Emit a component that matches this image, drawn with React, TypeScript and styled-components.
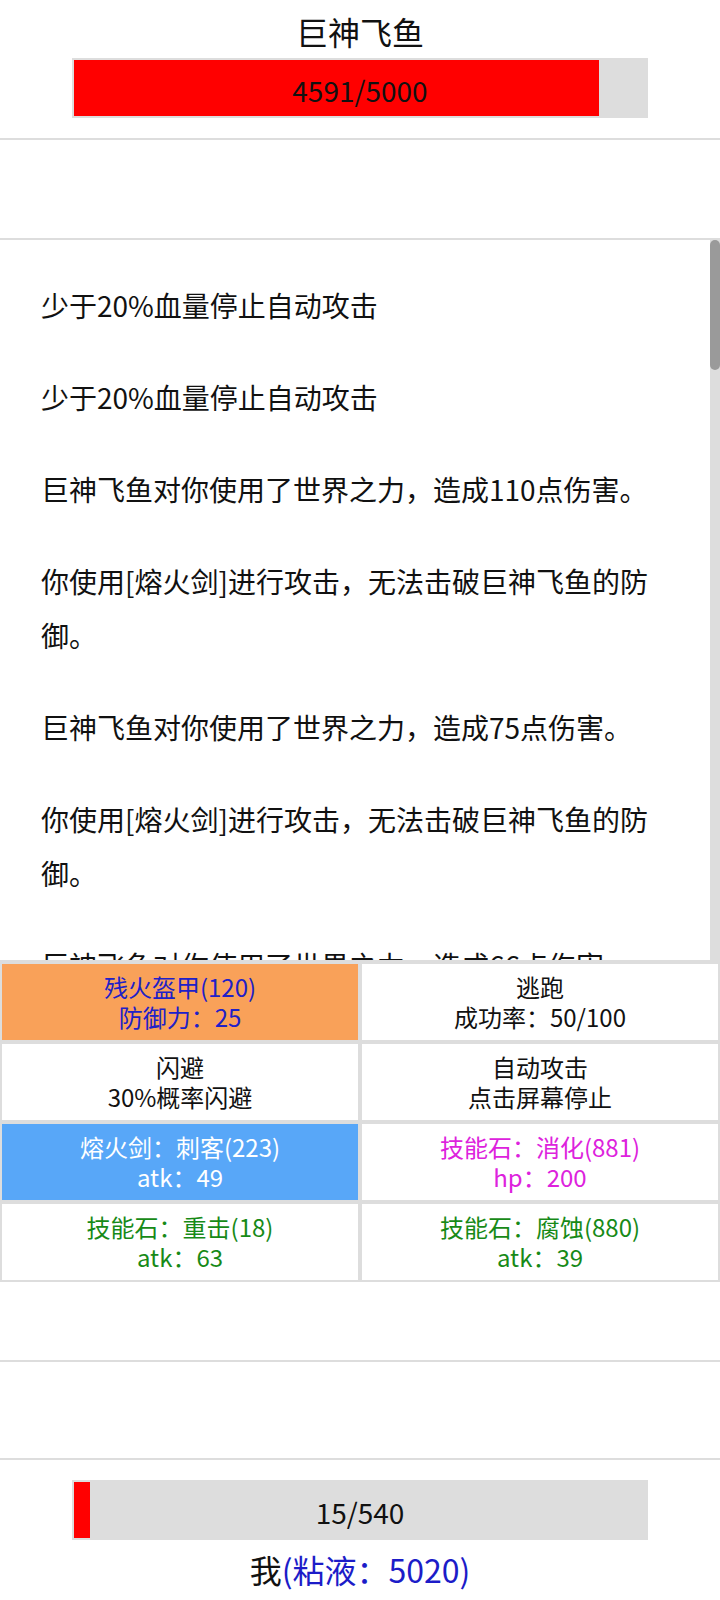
import styled, { createGlobalStyle } from 'styled-components';

const GlobalStyle = createGlobalStyle`
  html, body {
    margin: 0;
    padding: 0;
    background: #ffffff;
    font-family: "Noto Sans CJK SC", "Noto Sans", sans-serif;
    color: #111111;
  }
  * {
    box-sizing: border-box;
  }
`;

const MISS = '你使用[熔火剑]进行攻击，无法击破巨神飞鱼的防御。';
const hit = (n: number) => `巨神飞鱼对你使用了世界之力，造成${n}点伤害。`;

const extraDamage = [58, 91, 102, 70, 84, 63, 97, 115, 79, 88, 66, 105, 72];

const logLines: string[] = [
  '少于20%血量停止自动攻击',
  '少于20%血量停止自动攻击',
  hit(110),
  MISS,
  hit(75),
  MISS,
  hit(66),
  MISS,
  ...extraDamage.flatMap((n) => [hit(n), MISS]),
];

type Tone = 'orange' | 'blue' | 'plain';
type Ink = 'black' | 'navy' | 'white' | 'magenta' | 'green';

const actions: { title: string; sub: string; tone: Tone; ink: Ink }[] = [
  { title: '残火盔甲(120)', sub: '防御力：25', tone: 'orange', ink: 'navy' },
  { title: '逃跑', sub: '成功率：50/100', tone: 'plain', ink: 'black' },
  { title: '闪避', sub: '30%概率闪避', tone: 'plain', ink: 'black' },
  { title: '自动攻击', sub: '点击屏幕停止', tone: 'plain', ink: 'black' },
  { title: '熔火剑：刺客(223)', sub: 'atk：49', tone: 'blue', ink: 'white' },
  { title: '技能石：消化(881)', sub: 'hp：200', tone: 'plain', ink: 'magenta' },
  { title: '技能石：重击(18)', sub: 'atk：63', tone: 'plain', ink: 'green' },
  { title: '技能石：腐蚀(880)', sub: 'atk：39', tone: 'plain', ink: 'green' },
];

export default function App() {
  const enemyHp = 4591;
  const enemyMax = 5000;
  const myHp = 15;
  const myMax = 540;

  return (
    <Page>
      <GlobalStyle />
      <Header>
        <EnemyName>巨神飞鱼</EnemyName>
        <HpBar>
          <HpFill style={{ width: `${(enemyHp / enemyMax) * 100}%` }} />
          <HpText>
            {enemyHp}/{enemyMax}
          </HpText>
        </HpBar>
      </Header>

      <EmptyBand />

      <LogFrame>
        <BattleLog>
          {logLines.map((line, i) => (
            <LogLine key={i}>{line}</LogLine>
          ))}
        </BattleLog>
        <ScrollTrack>
          <ScrollThumb />
        </ScrollTrack>
      </LogFrame>

      <ActionGrid>
        {actions.map((a) => (
          <ActionCell key={a.title} $tone={a.tone} $ink={a.ink}>
            <span>{a.title}</span>
            <span>{a.sub}</span>
          </ActionCell>
        ))}
      </ActionGrid>

      <Spacer />
      <EmptyBand $bottom />

      <Footer>
        <HpBar>
          <HpFill style={{ width: `${(myHp / myMax) * 100}%` }} />
          <HpText>
            {myHp}/{myMax}
          </HpText>
        </HpBar>
        <PlayerName>
          我<Pet>(粘液：5020)</Pet>
        </PlayerName>
      </Footer>
    </Page>
  );
}

const Page = styled.div`
  width: 720px;
  min-height: 1600px;
  display: flex;
  flex-direction: column;
  background: #ffffff;
`;

const Header = styled.header`
  display: flex;
  flex-direction: column;
  align-items: center;
  padding: 10px 0 20px;
  border-bottom: 2px solid #dddddd;
`;

const EnemyName = styled.div`
  font-size: 32px;
  line-height: 42px;
  color: #111111;
  margin-bottom: 6px;
`;

const HpBar = styled.div`
  position: relative;
  width: 576px;
  height: 60px;
  border: 2px solid #dddddd;
  background: #dddddd;
  display: flex;
`;

const HpFill = styled.div`
  height: 100%;
  background: #ff0000;
`;

const HpText = styled.div`
  position: absolute;
  inset: 0;
  display: flex;
  align-items: center;
  justify-content: center;
  font-size: 28px;
  padding-top: 4px;
  color: #111111;
`;

const EmptyBand = styled.div<{ $bottom?: boolean }>`
  height: 100px;
  border-bottom: 2px solid #dddddd;
  ${(p) => (p.$bottom ? 'border-top: 2px solid #dddddd;' : '')}
`;

const LogFrame = styled.div`
  position: relative;
  height: 720px;
`;

const BattleLog = styled.div`
  height: 100%;
  overflow-y: scroll;
  scrollbar-width: none;
  padding: 38px 50px 0 41px;

  &::-webkit-scrollbar {
    display: none;
  }
`;

const ScrollTrack = styled.div`
  position: absolute;
  top: 0;
  right: 0;
  bottom: 0;
  width: 10px;
  background: #dddddd;
`;

const ScrollThumb = styled.div`
  height: 130px;
  border-radius: 5px;
  background: #9a9a9a;
`;

const LogLine = styled.p`
  margin: 0 0 38px;
  font-size: 28px;
  line-height: 54px;
  color: #111111;
`;

const toneBg: Record<Tone, string> = {
  orange: '#f9a159',
  blue: '#58a7f8',
  plain: '#ffffff',
};

const inkColor: Record<Ink, string> = {
  black: '#111111',
  navy: '#2020c8',
  white: '#ffffff',
  magenta: '#dd22dd',
  green: '#178a17',
};

const ActionGrid = styled.div`
  display: grid;
  grid-template-columns: 1fr 1fr;
  background: #dddddd;
  padding: 2px 0 0;
`;

const ActionCell = styled.div<{ $tone: Tone; $ink: Ink }>`
  margin: 2px;
  height: 76px;
  display: flex;
  flex-direction: column;
  align-items: center;
  justify-content: center;
  font-size: 24px;
  line-height: 30px;
  background: ${(p) => toneBg[p.$tone]};
  color: ${(p) => inkColor[p.$ink]};
`;

const Spacer = styled.div`
  height: 78px;
`;

const Footer = styled.footer`
  display: flex;
  flex-direction: column;
  align-items: center;
  padding-top: 20px;
`;

const PlayerName = styled.div`
  font-size: 32px;
  line-height: 46px;
  margin-top: 6px;
  color: #111111;
`;

const Pet = styled.span`
  color: #1c1cc8;
`;
